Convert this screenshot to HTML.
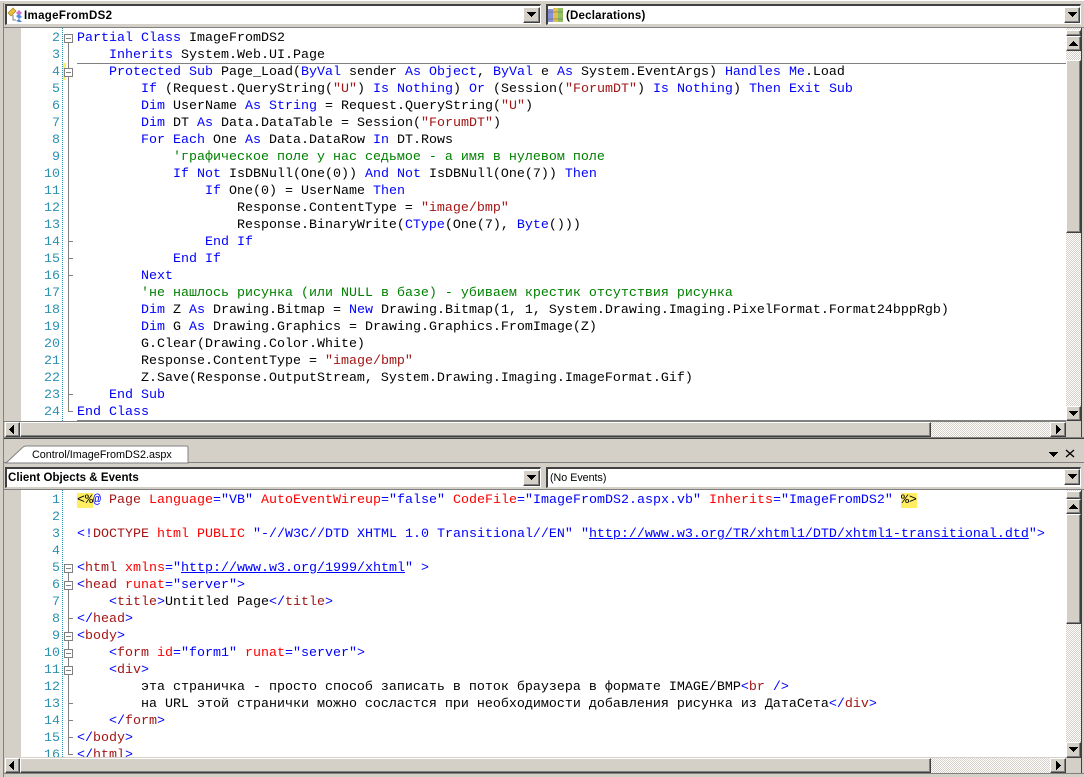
<!DOCTYPE html>
<html><head><meta charset="utf-8"><style>
html,body{margin:0;padding:0;background:#d4d0c8}
#root{position:relative;width:1084px;height:777px;overflow:hidden;background:#d4d0c8;font-family:"Liberation Sans",sans-serif}
.a{position:absolute}
pre{margin:0;font:13.33px/17px "Liberation Mono","Noto Sans CJK SC",monospace;color:#000;position:absolute;white-space:pre}
.num{color:#2b91af;text-align:right;width:40px;left:20px}
.k{color:#00f}.s{color:#a31515}.c{color:#008000}.r{color:#f00}.m{color:#a31515}.y{background:#ffee62}.u{color:#00f;text-decoration:underline}
.btn{position:absolute;background:#d4d0c8;box-sizing:border-box;border-style:solid;border-width:1px;border-color:#fff #404040 #404040 #fff;box-shadow:inset -1px -1px #808080}
.dith{position:absolute;background:repeating-conic-gradient(#d4d0c8 0 25%,#fff 0 50%) 0 0/2px 2px}
.combo{position:absolute;background:#fff;box-sizing:border-box;border-top:2px solid #404040;border-left:2px solid #404040;border-bottom:1px solid #d4d0c8;border-right:1px solid #fff}
.ct{position:absolute;font:bold 11.5px/14px "Liberation Sans",sans-serif;color:#000;white-space:pre}
.g{fill:#808080}
</style></head><body><div id="root">

<div class="a" style="left:3px;top:0;width:1px;height:777px;background:#808080"></div>
<div class="a" style="left:0;top:0;width:1084px;height:1px;background:#fff"></div>
<div class="a" style="left:0;top:1px;width:1084px;height:2px;background:#d4d0c8"></div>

<!-- top combos -->
<div class="combo" style="left:5px;top:4px;width:536px;height:21px"></div>
<div class="btn" style="left:523px;top:7px;width:17px;height:16px"></div>
<svg class="a" style="left:527px;top:12px" width="9" height="6"><path d="M0 0h9v1h-1v1h-1v1h-1v1h-1v1h-1v-1h-1v-1h-1v-1h-1v-1h-1z" fill="#000"/></svg>
<div class="combo" style="left:546px;top:4px;width:535px;height:21px"></div>
<div class="btn" style="left:1064px;top:7px;width:16px;height:16px"></div>
<svg class="a" style="left:1068px;top:12px" width="9" height="6"><path d="M0 0h9v1h-1v1h-1v1h-1v1h-1v1h-1v-1h-1v-1h-1v-1h-1v-1h-1z" fill="#000"/></svg>
<svg class="a" style="left:7px;top:7px" width="16" height="16"><path d="M1 6 6 1l3 3-5 5z" fill="#e8c040" stroke="#a08020" stroke-width=".7"/><path d="M12 3l3 3-3 3-3-3z" fill="#d070d0"/><path d="M12 12l3 3-3 0-3-1z" fill="#5080d0"/><path d="M9 9l3 3 3-2-3-3z" fill="#5090e0"/><path d="M6 8v5h3" stroke="#808080" fill="none"/></svg>
<div class="ct" style="left:24px;top:9px;letter-spacing:.33px">ImageFromDS2</div>
<svg class="a" style="left:548px;top:7px" width="16" height="16"><rect x="0" y="2" width="5" height="13" fill="#8a90d8"/><rect x="5" y="1" width="5" height="14" fill="#e0c050"/><rect x="10" y="1" width="5" height="14" fill="#90c060"/><path d="M0 5h15M0 12h15" stroke="#606060" stroke-width=".6"/></svg>
<div class="ct" style="left:566px;top:9px;letter-spacing:.2px">(Declarations)</div>

<div class="a" style="left:3px;top:27px;width:1081px;height:1px;background:#808080"></div>

<!-- top editor -->
<div class="a" style="left:4px;top:28px;width:1062px;height:393px;background:#fff;overflow:hidden">
  <div class="a" style="left:0;top:0;width:17px;height:393px;background:#d4d0c8"></div>
  <div class="a" style="left:73px;top:35px;width:989px;height:1px;background:#808080"></div>
  <div class="a" style="left:73px;top:392px;width:989px;height:1px;background:#808080"></div>
  <div class="a" style="left:59px;top:35px;width:3px;height:17px;background:#ffee62"></div>
  <div class="a" style="left:58px;top:0;height:393px;border-left:1px dotted #2b91af"></div>
  <svg class="a" style="left:60px;top:0" width="14" height="393"><rect class="g" x="4" y="6" width="1" height="378"/><rect class="g" x="4" y="213" width="5" height="1"/><rect class="g" x="4" y="230" width="5" height="1"/><rect class="g" x="4" y="247" width="5" height="1"/><rect class="g" x="4" y="366" width="5" height="1"/><rect class="g" x="4" y="383" width="5" height="1"/><g fill="#fff" stroke="#808080"><rect x=".5" y="6.500" width="8" height="8"/><rect x=".5" y="40.500" width="8" height="8"/></g><rect class="g" x="2" y="10" width="5" height="1"/><rect class="g" x="2" y="44" width="5" height="1"/></svg>
<pre class="num" style="top:2px;left:16px">2
3
4
5
6
7
8
9
10
11
12
13
14
15
16
17
18
19
20
21
22
23
24</pre>
<pre style="left:73px;top:2px"><span class="k">Partial</span> <span class="k">Class</span> ImageFromDS2
    <span class="k">Inherits</span> System.Web.UI.Page
    <span class="k">Protected</span> <span class="k">Sub</span> Page_Load(<span class="k">ByVal</span> sender <span class="k">As</span> <span class="k">Object</span>, <span class="k">ByVal</span> e <span class="k">As</span> System.EventArgs) <span class="k">Handles</span> <span class="k">Me</span>.Load
        <span class="k">If</span> (Request.QueryString(<span class="s">"U"</span>) <span class="k">Is</span> <span class="k">Nothing</span>) <span class="k">Or</span> (Session(<span class="s">"ForumDT"</span>) <span class="k">Is</span> <span class="k">Nothing</span>) <span class="k">Then</span> <span class="k">Exit</span> <span class="k">Sub</span>
        <span class="k">Dim</span> UserName <span class="k">As</span> <span class="k">String</span> = Request.QueryString(<span class="s">"U"</span>)
        <span class="k">Dim</span> DT <span class="k">As</span> Data.DataTable = Session(<span class="s">"ForumDT"</span>)
        <span class="k">For</span> <span class="k">Each</span> One <span class="k">As</span> Data.DataRow <span class="k">In</span> DT.Rows
            <span class="c">'графическое поле у нас седьмое - а имя в нулевом поле</span>
            <span class="k">If</span> <span class="k">Not</span> IsDBNull(One(0)) <span class="k">And</span> <span class="k">Not</span> IsDBNull(One(7)) <span class="k">Then</span>
                <span class="k">If</span> One(0) = UserName <span class="k">Then</span>
                    Response.ContentType = <span class="s">"image/bmp"</span>
                    Response.BinaryWrite(<span class="k">CType</span>(One(7), <span class="k">Byte</span>()))
                <span class="k">End</span> <span class="k">If</span>
            <span class="k">End</span> <span class="k">If</span>
        <span class="k">Next</span>
        <span class="c">'не нашлось рисунка (или NULL в базе) - убиваем крестик отсутствия рисунка</span>
        <span class="k">Dim</span> Z <span class="k">As</span> Drawing.Bitmap = <span class="k">New</span> Drawing.Bitmap(1, 1, System.Drawing.Imaging.PixelFormat.Format24bppRgb)
        <span class="k">Dim</span> G <span class="k">As</span> Drawing.Graphics = Drawing.Graphics.FromImage(Z)
        G.Clear(Drawing.Color.White)
        Response.ContentType = <span class="s">"image/bmp"</span>
        Z.Save(Response.OutputStream, System.Drawing.Imaging.ImageFormat.Gif)
    <span class="k">End</span> <span class="k">Sub</span>
<span class="k">End</span> <span class="k">Class</span></pre>
</div>

<!-- top vscroll -->
<div class="dith" style="left:1066px;top:28px;width:15px;height:393px"></div>
<div class="a" style="left:1081px;top:28px;width:1px;height:409px;background:#404040"></div>
<div class="btn" style="left:1066px;top:30px;width:15px;height:6px"></div>
<div class="btn" style="left:1066px;top:36px;width:15px;height:15px"></div>
<svg class="a" style="left:1069px;top:41px" width="9" height="5"><path d="M4 0h1v1h1v1h1v1h1v1h1v1H0V4h1V3h1V2h1V1h1z"/></svg>
<div class="btn" style="left:1066px;top:60px;width:15px;height:173px"></div>
<div class="btn" style="left:1066px;top:406px;width:15px;height:15px"></div>
<svg class="a" style="left:1069px;top:411px" width="9" height="5"><path d="M0 0h9v1H8v1H7v1H6v1H5v1H4V4H3V3H2V2H1V1H0z"/></svg>

<!-- top hscroll -->
<div class="a" style="left:4px;top:421px;width:1062px;height:1px;background:#808080"></div>
<div class="dith" style="left:5px;top:422px;width:1061px;height:15px"></div>
<div class="btn" style="left:5px;top:422px;width:15px;height:15px"></div>
<svg class="a" style="left:9px;top:425px" width="5" height="9"><path d="M5 0v9H4V8H3V7H2V6H1V5H0V4h1V3h1V2h1V1h1V0z"/></svg>
<div class="btn" style="left:20px;top:422px;width:911px;height:15px"></div>
<div class="btn" style="left:1050px;top:422px;width:16px;height:15px"></div>
<svg class="a" style="left:1056px;top:425px" width="5" height="9"><path d="M0 0v9h1V8h1V7h1V6h1V5h1V4H4V3H3V2H2V1H1V0z"/></svg>
<div class="a" style="left:1066px;top:421px;width:15px;height:16px;background:#d4d0c8"></div>
<div class="a" style="left:4px;top:437px;width:1080px;height:1px;background:#808080"></div>
<div class="a" style="left:4px;top:438px;width:1080px;height:1px;background:#404040"></div>

<!-- tab strip -->
<div class="a" style="left:4px;top:462px;width:1080px;height:1px;background:#808080"></div>
<svg class="a" style="left:4px;top:445px" width="186" height="19"><path d="M2 18 18 3q2-2 4-2H183l1 1V18z" fill="#fff" stroke="#808080"/></svg>
<div class="a" style="left:32px;top:448px;font:10.8px/14px 'Liberation Sans',sans-serif;color:#000;white-space:pre">Control/ImageFromDS2.aspx</div>
<svg class="a" style="left:1049px;top:452px" width="9" height="5"><path d="M0 0h9v1H8v1H7v1H6v1H5v1H4V4H3V3H2V2H1V1H0z"/></svg>
<svg class="a" style="left:1065px;top:449px" width="10" height="10"><path d="M1 1l8 7M9 1 1 8" stroke="#000" stroke-width="1.300" fill="none"/></svg>

<!-- bottom combos -->
<div class="combo" style="left:5px;top:467px;width:536px;height:21px"></div>
<div class="btn" style="left:523px;top:470px;width:17px;height:16px"></div>
<svg class="a" style="left:527px;top:475px" width="9" height="6"><path d="M0 0h9v1h-1v1h-1v1h-1v1h-1v1h-1v-1h-1v-1h-1v-1h-1v-1h-1z"/></svg>
<div class="combo" style="left:546px;top:467px;width:535px;height:21px"></div>
<div class="btn" style="left:1064px;top:469px;width:16px;height:16px"></div>
<svg class="a" style="left:1068px;top:474px" width="9" height="6"><path d="M0 0h9v1h-1v1h-1v1h-1v1h-1v1h-1v-1h-1v-1h-1v-1h-1v-1h-1z"/></svg>
<div class="ct" style="left:8px;top:471px;letter-spacing:.05px">Client Objects &amp; Events</div>
<div class="a" style="left:550px;top:471px;font:10.7px/14px 'Liberation Sans',sans-serif;color:#000">(No Events)</div>
<div class="a" style="left:3px;top:489px;width:1081px;height:1px;background:#808080"></div>

<!-- bottom editor -->
<div class="a" style="left:4px;top:490px;width:1062px;height:267px;background:#fff;overflow:hidden">
  <div class="a" style="left:0;top:0;width:17px;height:267px;background:#d4d0c8"></div>
  <div class="a" style="left:58px;top:0;height:267px;border-left:1px dotted #2b91af"></div>
  <svg class="a" style="left:60px;top:0" width="14" height="267"><rect class="g" x="4" y="74" width="1" height="190"/><rect class="g" x="4" y="128" width="5" height="1"/><rect class="g" x="4" y="213" width="5" height="1"/><rect class="g" x="4" y="230" width="5" height="1"/><rect class="g" x="4" y="247" width="5" height="1"/><rect class="g" x="4" y="264" width="5" height="1"/><g fill="#fff" stroke="#808080"><rect x=".5" y="74.500" width="8" height="8"/><rect x=".5" y="91.500" width="8" height="8"/><rect x=".5" y="142.500" width="8" height="8"/><rect x=".5" y="159.500" width="8" height="8"/><rect x=".5" y="176.500" width="8" height="8"/></g><rect class="g" x="2" y="78" width="5" height="1"/><rect class="g" x="2" y="95" width="5" height="1"/><rect class="g" x="2" y="146" width="5" height="1"/><rect class="g" x="2" y="163" width="5" height="1"/><rect class="g" x="2" y="180" width="5" height="1"/></svg>
<pre class="num" style="top:2px;left:16px">1
2
3
4
5
6
7
8
9
10
11
12
13
14
15
16</pre>
<pre style="left:73px;top:2px"><span class="y">&lt;%</span><span class="k">@</span> <span class="m">Page</span> <span class="r">Language</span><span class="k">="VB"</span> <span class="r">AutoEventWireup</span><span class="k">="false"</span> <span class="r">CodeFile</span><span class="k">="ImageFromDS2.aspx.vb"</span> <span class="r">Inherits</span><span class="k">="ImageFromDS2"</span> <span class="y">%&gt;</span>

<span class="k">&lt;!</span><span class="m">DOCTYPE</span> <span class="r">html</span> <span class="r">PUBLIC</span> <span class="k">"-//W3C//DTD XHTML 1.0 Transitional//EN"</span> <span class="k">"</span><span class="u">http://www.w3.org/TR/xhtml1/DTD/xhtml1-transitional.dtd</span><span class="k">"&gt;</span>

<span class="k">&lt;</span><span class="m">html</span> <span class="r">xmlns</span><span class="k">="</span><span class="u">http://www.w3.org/1999/xhtml</span><span class="k">" &gt;</span>
<span class="k">&lt;</span><span class="m">head</span> <span class="r">runat</span><span class="k">="server"&gt;</span>
    <span class="k">&lt;</span><span class="m">title</span><span class="k">&gt;</span>Untitled Page<span class="k">&lt;/</span><span class="m">title</span><span class="k">&gt;</span>
<span class="k">&lt;/</span><span class="m">head</span><span class="k">&gt;</span>
<span class="k">&lt;</span><span class="m">body</span><span class="k">&gt;</span>
    <span class="k">&lt;</span><span class="m">form</span> <span class="r">id</span><span class="k">="form1"</span> <span class="r">runat</span><span class="k">="server"&gt;</span>
    <span class="k">&lt;</span><span class="m">div</span><span class="k">&gt;</span>
        эта страничка - просто способ записать в поток браузера в формате IMAGE/BMP<span class="k">&lt;</span><span class="m">br</span> <span class="k">/&gt;</span>
        на URL этой странички можно сосластся при необходимости добавления рисунка из ДатаСета<span class="k">&lt;/</span><span class="m">div</span><span class="k">&gt;</span>
    <span class="k">&lt;/</span><span class="m">form</span><span class="k">&gt;</span>
<span class="k">&lt;/</span><span class="m">body</span><span class="k">&gt;</span>
<span class="k">&lt;/</span><span class="m">html</span><span class="k">&gt;</span></pre>
</div>

<!-- bottom vscroll -->
<div class="dith" style="left:1066px;top:490px;width:15px;height:267px"></div>
<div class="a" style="left:1081px;top:490px;width:1px;height:283px;background:#404040"></div>
<div class="btn" style="left:1066px;top:491px;width:15px;height:8px"></div>
<div class="btn" style="left:1066px;top:499px;width:15px;height:15px"></div>
<svg class="a" style="left:1069px;top:504px" width="9" height="5"><path d="M4 0h1v1h1v1h1v1h1v1h1v1H0V4h1V3h1V2h1V1h1z"/></svg>
<div class="btn" style="left:1066px;top:514px;width:15px;height:110px"></div>
<div class="btn" style="left:1066px;top:742px;width:15px;height:16px"></div>
<svg class="a" style="left:1069px;top:747px" width="9" height="5"><path d="M0 0h9v1H8v1H7v1H6v1H5v1H4V4H3V3H2V2H1V1H0z"/></svg>

<!-- bottom hscroll -->
<div class="dith" style="left:5px;top:758px;width:1061px;height:15px"></div>
<div class="btn" style="left:5px;top:758px;width:15px;height:15px"></div>
<svg class="a" style="left:9px;top:761px" width="5" height="9"><path d="M5 0v9H4V8H3V7H2V6H1V5H0V4h1V3h1V2h1V1h1V0z"/></svg>
<div class="btn" style="left:20px;top:758px;width:911px;height:15px"></div>
<div class="btn" style="left:1050px;top:758px;width:16px;height:15px"></div>
<svg class="a" style="left:1056px;top:761px" width="5" height="9"><path d="M0 0v9h1V8h1V7h1V6h1V5h1V4H4V3H3V2H2V1H1V0z"/></svg>
<div class="a" style="left:3px;top:773px;width:1081px;height:1px;background:#808080"></div>

</div></body></html>
